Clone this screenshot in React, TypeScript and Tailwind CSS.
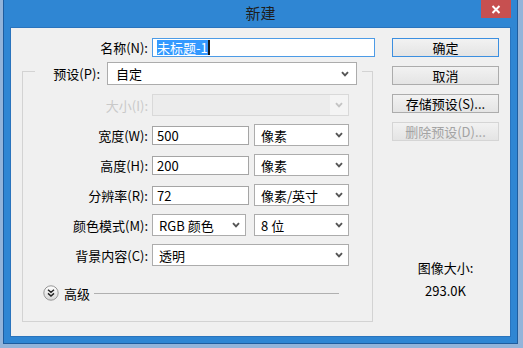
import type { ReactNode } from 'react';

function Chevron({ color = '#555555' }: { color?: string }) {
  return (
    <svg width="8" height="6" viewBox="0 0 8 6">
      <path d="M1 1.2 L4 4.4 L7 1.2" fill="none" stroke={color} strokeWidth="1.9" />
    </svg>
  );
}

function Select({ value, className = '' }: { value: string; className?: string }) {
  return (
    <div
      className={`flex h-[22px] items-center justify-between border border-[#acacac] bg-white pr-[5px] pl-[6px] ${className}`}
    >
      <span className="leading-none">{value}</span>
      <Chevron />
    </div>
  );
}

function TextBox({ children, className = '' }: { children: ReactNode; className?: string }) {
  return (
    <div
      className={`flex h-[19px] items-center border border-[#a5a5a5] bg-white pl-[4px] leading-none ${className}`}
    >
      {children}
    </div>
  );
}

function Button({
  children,
  variant = 'normal',
}: {
  children: ReactNode;
  variant?: 'normal' | 'default' | 'disabled';
}) {
  const styles = {
    normal: 'border-[#acacac] text-black',
    default: 'border-[#3c8fe0] text-black',
    disabled: 'border-[#d5d5d5] text-[#a3a3a3]',
  };
  return (
    <div
      className={`flex h-[19px] items-center justify-center border bg-gradient-to-b from-[#f2f2f2] to-[#e4e4e4] leading-none ${styles[variant]}`}
    >
      {children}
    </div>
  );
}

function Row({ label, children }: { label: string; children: ReactNode }) {
  return (
    <div className="flex h-[22px] items-center gap-[4px]">
      <div className="w-[125px] text-right leading-none">{label}</div>
      {children}
    </div>
  );
}

export default function App() {
  return (
    <div className="flex h-[348px] w-[523px] bg-[#93b4da] pr-[5px] pb-[4px] pl-[3px] font-['Noto_Sans_CJK_SC','Noto_Sans',sans-serif] text-[13px] text-black">
      <div className="flex flex-1 flex-col border-x border-b border-[#1f5d9e] bg-[#2f86d3]">
        {/* title bar */}
        <div className="grid h-[27px] grid-cols-[1fr_auto_1fr]">
          <div />
          <div className="pt-[4px] text-[15px] leading-[18px] text-[#1e1e1e]">新建</div>
          <div className="flex justify-end pr-[6px]">
            <div className="flex h-[18px] w-[30px] items-center justify-center bg-[#c75050]">
              <svg width="10" height="9" viewBox="0 0 10 9">
                <path d="M1.5 1 L8.5 8 M8.5 1 L1.5 8" stroke="#ffffff" strokeWidth="2" />
              </svg>
            </div>
          </div>
        </div>

        {/* dialog body */}
        <div className="mx-[6px] mb-[6px] flex flex-1 border border-[#2a74bd] bg-[#f0f0f0]">
          <div className="flex w-[381px] flex-col pt-[10px]">
            <div className="flex h-[19px] items-center gap-[4px]">
              <div className="w-[137px] text-right leading-none">名称(N):</div>
              <div className="flex h-[19px] w-[223px] items-center border border-[#4d9be6] bg-white pl-[4px] leading-none">
                <span className="bg-[#3399ff] py-[1px] text-white">未标题-1</span>
                <span className="h-[15px] w-[2px] bg-[#1a1a1a]" />
              </div>
            </div>

            <fieldset className="mt-[5px] ml-[11px] w-[351px] border border-[#d3d3d3] px-0 pb-[20px]">
              <legend className="ml-[12px] h-[18px] pr-[5px]">
                <div className="flex items-start gap-[7px]">
                  <div className="flex h-[23px] w-[65px] items-center justify-end leading-none">预设(P):</div>
                  <Select value="自定" className="h-[23px] w-[250px] pr-[7px] pl-[8px]" />
                </div>
              </legend>

              <div className="flex flex-col gap-[8px] pt-[14px]">
                <div className="flex h-[22px] items-center gap-[4px]">
                  <div className="w-[125px] text-right leading-none text-[#c9c9c9]">大小(I):</div>
                  <div className="flex h-[22px] w-[197px] border border-[#d9d9d9]">
                    <div className="flex-1 bg-[#ececec]" />
                    <div className="flex w-[18px] items-center justify-center bg-[#f4f4f4]">
                      <Chevron color="#c4c4c4" />
                    </div>
                  </div>
                </div>
                <Row label="宽度(W):">
                  <TextBox className="w-[97px]">500</TextBox>
                  <Select value="像素" className="ml-[1px] w-[95px]" />
                </Row>
                <Row label="高度(H):">
                  <TextBox className="w-[97px]">200</TextBox>
                  <Select value="像素" className="ml-[1px] w-[95px]" />
                </Row>
                <Row label="分辨率(R):">
                  <TextBox className="w-[97px]">72</TextBox>
                  <Select value="像素/英寸" className="ml-[1px] w-[95px]" />
                </Row>
                <Row label="颜色模式(M):">
                  <Select value="RGB 颜色" className="w-[94px]" />
                  <Select value="8 位" className="ml-[4px] w-[95px]" />
                </Row>
                <Row label="背景内容(C):">
                  <Select value="透明" className="w-[197px]" />
                </Row>
              </div>

              <div className="mt-[19px] flex h-[16px] items-center pl-[20px]">
                <svg width="16" height="16" viewBox="0 0 16 16">
                  <defs>
                    <linearGradient id="adv" x1="0" y1="0" x2="0" y2="1">
                      <stop offset="0" stopColor="#ffffff" />
                      <stop offset="1" stopColor="#d6d6d6" />
                    </linearGradient>
                  </defs>
                  <circle cx="8" cy="8" r="7.2" fill="url(#adv)" stroke="#959595" strokeWidth="1" />
                  <path d="M5 4.8 L8 7.4 L11 4.8 M5 8.4 L8 11 L11 8.4" fill="none" stroke="#222222" strokeWidth="1.4" />
                </svg>
                <span className="ml-[5px] leading-none">高级</span>
                <div className="mr-[33px] ml-[4px] h-px flex-1 bg-[#b0b0b0]" />
              </div>
            </fieldset>
          </div>

          <div className="flex w-[107px] flex-col gap-[9px] pt-[10px]">
            <Button variant="default">确定</Button>
            <Button>取消</Button>
            <Button>存储预设(S)...</Button>
            <Button variant="disabled">删除预设(D)...</Button>
            <div className="mt-auto mb-[37px] flex flex-col items-center gap-[7px] leading-[16px]">
              <div>图像大小:</div>
              <div>293.0K</div>
            </div>
          </div>
        </div>
      </div>
    </div>
  );
}
